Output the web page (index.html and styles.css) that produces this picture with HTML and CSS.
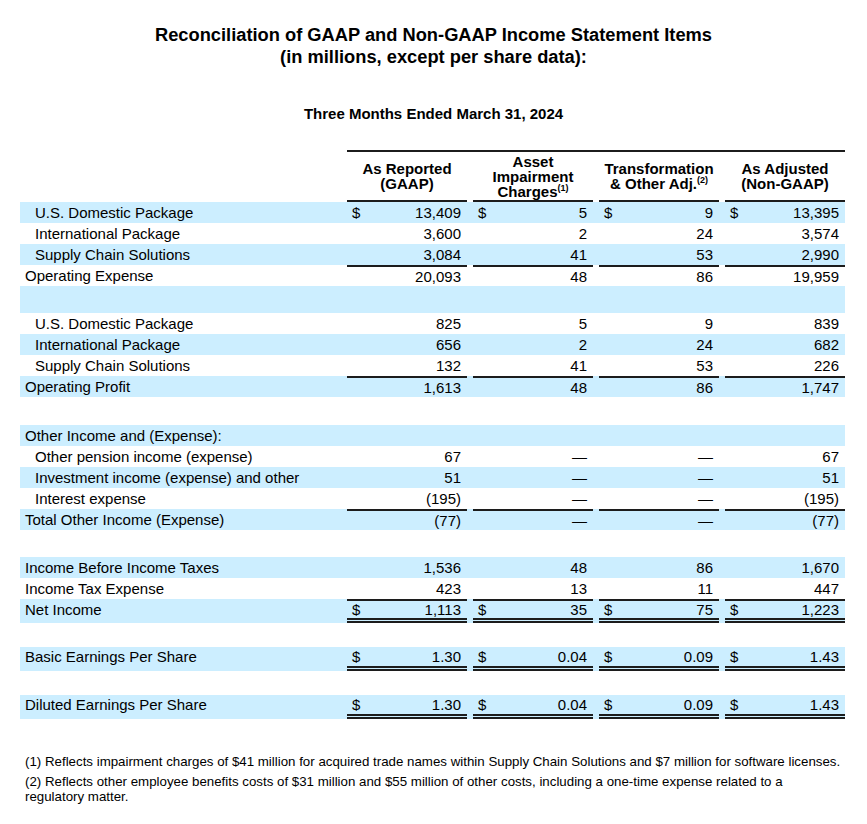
FILE: index.html
```html
<!DOCTYPE html>
<html>
<head>
<meta charset="utf-8">
<link rel="stylesheet" href="styles.css">
</head>
<body>
<div class="page">
  <h1 class="title">Reconciliation of GAAP and Non-GAAP Income Statement Items<br>(in millions, except per share data):</h1>
  <h2 class="period">Three Months Ended March 31, 2024</h2>
  <table class="recon">
    <colgroup>
      <col class="c-label">
      <col class="c-gap"><col class="c-num">
      <col class="c-gap"><col class="c-num">
      <col class="c-gap"><col class="c-num">
      <col class="c-gap"><col class="c-num">
    </colgroup>
    <thead>
      <tr>
        <th class="h-label"></th>
        <th class="h-gap first"></th><th class="h-col">As Reported<br>(GAAP)</th>
        <th class="h-gap"></th><th class="h-col">Asset<br>Impairment<br>Charges<sup>(1)</sup></th>
        <th class="h-gap"></th><th class="h-col">Transformation<br>&amp; Other Adj.<sup>(2)</sup></th>
        <th class="h-gap"></th><th class="h-col">As Adjusted<br>(Non-GAAP)</th>
      </tr>
    </thead>
    <tbody>
      <tr class="blue">
        <td><div class="cell sub">U.S. Domestic Package</div></td>
        <td></td><td><div class="cell num"><span>$</span><span>13,409</span></div></td>
        <td></td><td><div class="cell num"><span>$</span><span>5</span></div></td>
        <td></td><td><div class="cell num"><span>$</span><span>9</span></div></td>
        <td></td><td><div class="cell num"><span>$</span><span>13,395</span></div></td>
      </tr>
      <tr>
        <td><div class="cell sub">International Package</div></td>
        <td></td><td><div class="cell num"><span></span><span>3,600</span></div></td>
        <td></td><td><div class="cell num"><span></span><span>2</span></div></td>
        <td></td><td><div class="cell num"><span></span><span>24</span></div></td>
        <td></td><td><div class="cell num"><span></span><span>3,574</span></div></td>
      </tr>
      <tr class="blue">
        <td><div class="cell sub">Supply Chain Solutions</div></td>
        <td></td><td><div class="cell num"><span></span><span>3,084</span></div></td>
        <td></td><td><div class="cell num"><span></span><span>41</span></div></td>
        <td></td><td><div class="cell num"><span></span><span>53</span></div></td>
        <td></td><td><div class="cell num"><span></span><span>2,990</span></div></td>
      </tr>
      <tr>
        <td><div class="cell">Operating Expense</div></td>
        <td></td><td><div class="cell num top"><span></span><span>20,093</span></div></td>
        <td></td><td><div class="cell num top"><span></span><span>48</span></div></td>
        <td></td><td><div class="cell num top"><span></span><span>86</span></div></td>
        <td></td><td><div class="cell num top"><span></span><span>19,959</span></div></td>
      </tr>
      <tr class="blue spacer sp-a"><td colspan="9"></td></tr>
      <tr>
        <td><div class="cell sub">U.S. Domestic Package</div></td>
        <td></td><td><div class="cell num"><span></span><span>825</span></div></td>
        <td></td><td><div class="cell num"><span></span><span>5</span></div></td>
        <td></td><td><div class="cell num"><span></span><span>9</span></div></td>
        <td></td><td><div class="cell num"><span></span><span>839</span></div></td>
      </tr>
      <tr class="blue">
        <td><div class="cell sub">International Package</div></td>
        <td></td><td><div class="cell num"><span></span><span>656</span></div></td>
        <td></td><td><div class="cell num"><span></span><span>2</span></div></td>
        <td></td><td><div class="cell num"><span></span><span>24</span></div></td>
        <td></td><td><div class="cell num"><span></span><span>682</span></div></td>
      </tr>
      <tr>
        <td><div class="cell sub">Supply Chain Solutions</div></td>
        <td></td><td><div class="cell num"><span></span><span>132</span></div></td>
        <td></td><td><div class="cell num"><span></span><span>41</span></div></td>
        <td></td><td><div class="cell num"><span></span><span>53</span></div></td>
        <td></td><td><div class="cell num"><span></span><span>226</span></div></td>
      </tr>
      <tr class="blue">
        <td><div class="cell">Operating Profit</div></td>
        <td></td><td><div class="cell num top"><span></span><span>1,613</span></div></td>
        <td></td><td><div class="cell num top"><span></span><span>48</span></div></td>
        <td></td><td><div class="cell num top"><span></span><span>86</span></div></td>
        <td></td><td><div class="cell num top"><span></span><span>1,747</span></div></td>
      </tr>
      <tr class="spacer sp-b"><td colspan="9"></td></tr>
      <tr class="blue">
        <td><div class="cell">Other Income and (Expense):</div></td>
        <td></td><td><div class="cell"></div></td>
        <td></td><td><div class="cell"></div></td>
        <td></td><td><div class="cell"></div></td>
        <td></td><td><div class="cell"></div></td>
      </tr>
      <tr>
        <td><div class="cell sub">Other pension income (expense)</div></td>
        <td></td><td><div class="cell num"><span></span><span>67</span></div></td>
        <td></td><td><div class="cell num"><span></span><span>—</span></div></td>
        <td></td><td><div class="cell num"><span></span><span>—</span></div></td>
        <td></td><td><div class="cell num"><span></span><span>67</span></div></td>
      </tr>
      <tr class="blue">
        <td><div class="cell sub">Investment income (expense) and other</div></td>
        <td></td><td><div class="cell num"><span></span><span>51</span></div></td>
        <td></td><td><div class="cell num"><span></span><span>—</span></div></td>
        <td></td><td><div class="cell num"><span></span><span>—</span></div></td>
        <td></td><td><div class="cell num"><span></span><span>51</span></div></td>
      </tr>
      <tr>
        <td><div class="cell sub">Interest expense</div></td>
        <td></td><td><div class="cell num"><span></span><span>(195)</span></div></td>
        <td></td><td><div class="cell num"><span></span><span>—</span></div></td>
        <td></td><td><div class="cell num"><span></span><span>—</span></div></td>
        <td></td><td><div class="cell num"><span></span><span>(195)</span></div></td>
      </tr>
      <tr class="blue">
        <td><div class="cell">Total Other Income (Expense)</div></td>
        <td></td><td><div class="cell num top"><span></span><span>(77)</span></div></td>
        <td></td><td><div class="cell num top"><span></span><span>—</span></div></td>
        <td></td><td><div class="cell num top"><span></span><span>—</span></div></td>
        <td></td><td><div class="cell num top"><span></span><span>(77)</span></div></td>
      </tr>
      <tr class="spacer sp-c"><td colspan="9"></td></tr>
      <tr class="blue">
        <td><div class="cell">Income Before Income Taxes</div></td>
        <td></td><td><div class="cell num"><span></span><span>1,536</span></div></td>
        <td></td><td><div class="cell num"><span></span><span>48</span></div></td>
        <td></td><td><div class="cell num"><span></span><span>86</span></div></td>
        <td></td><td><div class="cell num"><span></span><span>1,670</span></div></td>
      </tr>
      <tr>
        <td><div class="cell">Income Tax Expense</div></td>
        <td></td><td><div class="cell num"><span></span><span>423</span></div></td>
        <td></td><td><div class="cell num"><span></span><span>13</span></div></td>
        <td></td><td><div class="cell num"><span></span><span>11</span></div></td>
        <td></td><td><div class="cell num"><span></span><span>447</span></div></td>
      </tr>
      <tr class="blue">
        <td><div class="cell net">Net Income</div></td>
        <td></td><td><div class="cell num net top dbl"><span>$</span><span>1,113</span></div></td>
        <td></td><td><div class="cell num net top dbl"><span>$</span><span>35</span></div></td>
        <td></td><td><div class="cell num net top dbl"><span>$</span><span>75</span></div></td>
        <td></td><td><div class="cell num net top dbl"><span>$</span><span>1,223</span></div></td>
      </tr>
      <tr class="spacer sp-d"><td colspan="9"></td></tr>
      <tr class="blue">
        <td><div class="cell eps">Basic Earnings Per Share</div></td>
        <td></td><td><div class="cell num eps dbl"><span>$</span><span>1.30</span></div></td>
        <td></td><td><div class="cell num eps dbl"><span>$</span><span>0.04</span></div></td>
        <td></td><td><div class="cell num eps dbl"><span>$</span><span>0.09</span></div></td>
        <td></td><td><div class="cell num eps dbl"><span>$</span><span>1.43</span></div></td>
      </tr>
      <tr class="spacer sp-e"><td colspan="9"></td></tr>
      <tr class="blue">
        <td><div class="cell eps">Diluted Earnings Per Share</div></td>
        <td></td><td><div class="cell num eps dbl"><span>$</span><span>1.30</span></div></td>
        <td></td><td><div class="cell num eps dbl"><span>$</span><span>0.04</span></div></td>
        <td></td><td><div class="cell num eps dbl"><span>$</span><span>0.09</span></div></td>
        <td></td><td><div class="cell num eps dbl"><span>$</span><span>1.43</span></div></td>
      </tr>
    </tbody>
  </table>
  <div class="notes">
    <p>(1) Reflects impairment charges of $41 million for acquired trade names within Supply Chain Solutions and $7 million for software licenses.</p>
    <p>(2) Reflects other employee benefits costs of $31 million and $55 million of other costs, including a one-time expense related to a regulatory matter.</p>
  </div>
</div>
</body>
</html>
```

FILE: styles.css
```css
html, body {
  margin: 0;
  padding: 0;
  background: #ffffff;
}

body {
  font-family: "Liberation Sans", Arial, sans-serif;
  color: #000000;
}

.page {
  width: 867px;
  padding-top: 24px;
}

.title {
  margin: 0;
  font-size: 18.3px;
  line-height: 22px;
  font-weight: bold;
  text-align: center;
}

.period {
  margin: 37px 0 0 0;
  font-size: 15px;
  line-height: 18px;
  font-weight: bold;
  text-align: center;
}

.recon {
  margin: 27px 0 0 20px;
  width: 825px;
  table-layout: fixed;
  border-collapse: separate;
  border-spacing: 0;
  font-size: 15px;
}

.c-label { width: 321px; }
.c-gap { width: 6px; }
.c-num { width: 120px; }

.recon th,
.recon td {
  padding: 0;
  vertical-align: top;
}

.recon thead th {
  border-top: 2px solid #1c1c1c;
  height: 48px;
  vertical-align: middle;
  font-weight: bold;
  line-height: 15px;
  text-align: center;
}

.recon thead th.h-label,
.recon thead th.h-gap.first {
  border-top: 2px solid transparent;
}

.recon thead th.h-col {
  border-bottom: 2px solid #1c1c1c;
}

.recon thead th.h-gap,
.recon thead th.h-label {
  border-bottom: 2px solid transparent;
}

.recon sup {
  font-size: 9px;
  line-height: 0;
  vertical-align: 6px;
}

.blue {
  background: #cceeff;
}

.cell {
  box-sizing: border-box;
  height: 21px;
  line-height: 19px;
  padding: 1px 6px 0 5px;
  white-space: nowrap;
}

.cell.sub {
  padding-left: 15px;
}

.cell.num {
  display: flex;
  justify-content: space-between;
}

.cell.top {
  border-top: 2px solid #1c1c1c;
  line-height: 19px;
  padding-top: 0;
}

.cell.net {
  height: 24px;
  line-height: 17px;
  padding-top: 2px;
}

.cell.num.net {
  padding-top: 0;
}

.cell.eps {
  height: 24px;
  line-height: 19px;
  padding-top: 0;
}

.cell.dbl {
  border-bottom: 5px double #1c1c1c;
}

.spacer td {
  padding: 0;
}

.sp-a td { height: 27px; }
.sp-b td { height: 28px; }
.sp-c td { height: 27px; }
.sp-d td { height: 24px; }
.sp-e td { height: 24px; }

.notes {
  margin: 35px 0 0 25px;
  width: 819px;
  font-size: 13.3px;
  line-height: 15px;
}

.notes p {
  margin: 0 0 5px 0;
}
```
